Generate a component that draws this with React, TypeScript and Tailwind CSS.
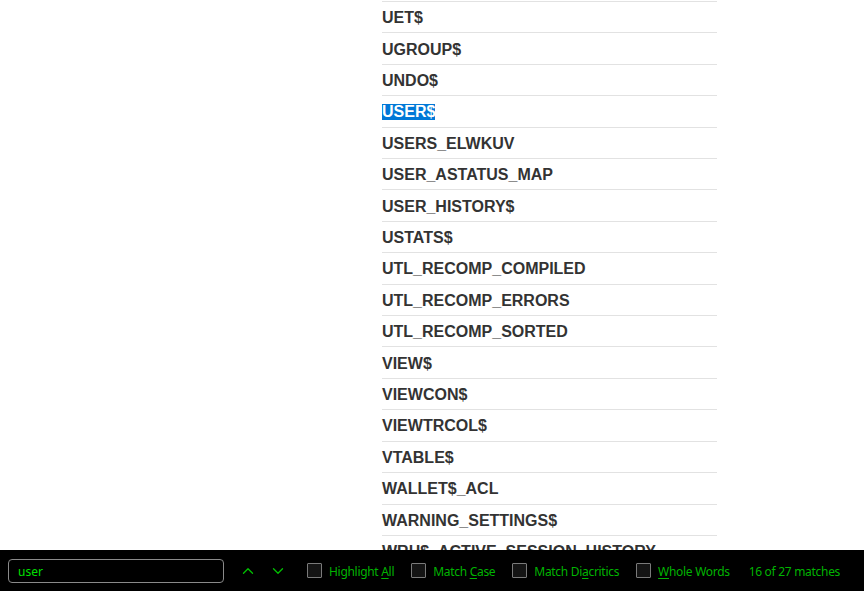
import { ChevronUp, ChevronDown } from "lucide-react";

const rows = [
  "UET$",
  "UGROUP$",
  "UNDO$",
  "USER$",
  "USERS_ELWKUV",
  "USER_ASTATUS_MAP",
  "USER_HISTORY$",
  "USTATS$",
  "UTL_RECOMP_COMPILED",
  "UTL_RECOMP_ERRORS",
  "UTL_RECOMP_SORTED",
  "VIEW$",
  "VIEWCON$",
  "VIEWTRCOL$",
  "VTABLE$",
  "WALLET$_ACL",
  "WARNING_SETTINGS$",
  "WRH$_ACTIVE_SESSION_HISTORY",
];

function Check({ label }: { label: [string, string, string] }) {
  return (
    <div className="flex items-center gap-[7px] shrink-0">
      <div className="w-[15px] h-[15px] shrink-0 border border-[#7a7a7a] bg-[#141414] rounded-[1px]" />
      <span className="text-[#00b400] whitespace-nowrap pt-[3px]">
        {label[0]}
        <span className="underline underline-offset-2">{label[1]}</span>
        {label[2]}
      </span>
    </div>
  );
}

export default function App() {
  return (
    <div className="relative w-[864px] h-[591px] overflow-hidden bg-white">
      <div className="ml-[382px] w-[335px] pt-[1px]">
        {rows.map((r) => (
          <div
            key={r}
            className="h-[31.41px] border-t border-[#e2e2e2] flex items-center pt-[2px] text-[16px] font-bold text-[#333333]"
            style={{ fontFamily: "'Liberation Sans', Arial, sans-serif" }}
          >
            {r === "USER$" ? (
              <span className="bg-[#0078d7] text-white leading-[16px]">{r}</span>
            ) : (
              r
            )}
          </div>
        ))}
      </div>

      <div
        className="absolute left-0 right-0 bottom-0 h-[41px] bg-black flex items-center text-[12px] tracking-[-0.3px] whitespace-nowrap"
        style={{ fontFamily: "'Noto Sans', 'Open Sans', sans-serif" }}
      >
        <div className="ml-[8px] w-[216px] h-[24px] shrink-0 border border-[#8a8a8a] rounded-[4px] flex items-center pl-[9px] pt-[2px] text-[#00e000] text-[12px] tracking-normal">
          user
        </div>
        <ChevronUp className="ml-[15px] mt-[1px] w-[18px] h-[18px] shrink-0 text-[#00c000]" strokeWidth={1.75} />
        <ChevronDown className="ml-[12px] mt-[1px] w-[18px] h-[18px] shrink-0 text-[#00c000]" strokeWidth={1.75} />
        <div className="ml-[20px] flex items-center gap-[17px]">
          <Check label={["Highlight ", "A", "ll"]} />
          <Check label={["Match ", "C", "ase"]} />
          <Check label={["Match Di", "a", "critics"]} />
          <Check label={["", "W", "hole Words"]} />
          <span className="ml-[2px] pt-[3px] text-[#00b400]">16 of 27 matches</span>
        </div>
      </div>
    </div>
  );
}
